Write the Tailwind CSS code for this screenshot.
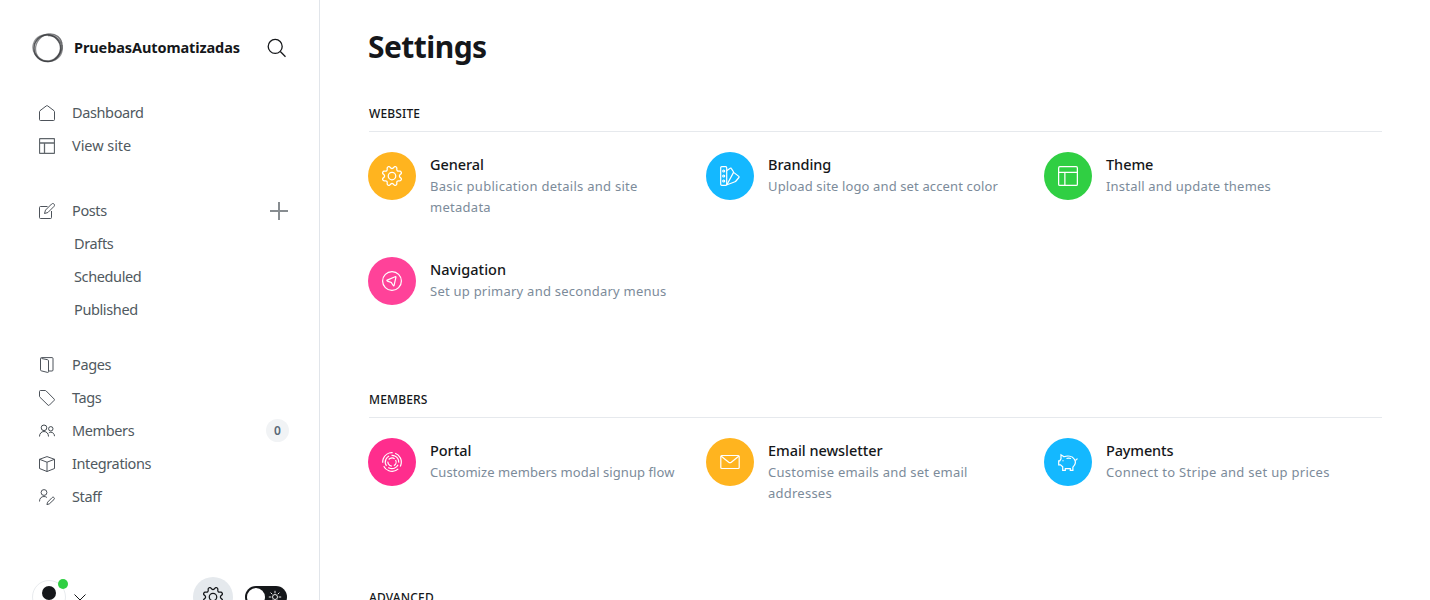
<!DOCTYPE html>
<html lang="en">
<head>
<meta charset="utf-8">
<title>Settings</title>
<script src="https://cdn.jsdelivr.net/npm/@tailwindcss/browser@4"></script>
</head>
<body class="h-[600px] overflow-hidden bg-white font-['Noto_Sans','Open_Sans',sans-serif] text-[#15171a]">
<svg class="hidden">
  <symbol id="gear" viewBox="0 0 24 24"><path d="M10.546 2.438a1.957 1.957 0 0 0 2.908 0L14.4 1.4a1.959 1.959 0 0 1 3.41 1.413l-.071 1.4A1.958 1.958 0 0 0 19.79 6.271l1.4-.071A1.959 1.959 0 0 1 22.6 9.606l-1.042.94a1.96 1.96 0 0 0 0 2.909l1.042.94a1.959 1.959 0 0 1-1.413 3.41l-1.4-.071a1.958 1.958 0 0 0-2.056 2.056l.071 1.4A1.959 1.959 0 0 1 14.4 22.6l-.941-1.041a1.959 1.959 0 0 0-2.908 0L9.606 22.6A1.959 1.959 0 0 1 6.2 21.192l.072-1.4a1.958 1.958 0 0 0-2.056-2.056l-1.4.071A1.958 1.958 0 0 1 1.4 14.4l1.041-.94a1.96 1.96 0 0 0 0-2.909L1.4 9.606A1.958 1.958 0 0 1 2.809 6.2l1.4.071A1.958 1.958 0 0 0 6.267 4.211L6.2 2.81A1.959 1.959 0 0 1 9.606 1.4Z"/><circle cx="12" cy="12" r="4.5"/></symbol>
  <symbol id="layout" viewBox="0 0 24 24"><rect x=".75" y=".75" width="22.5" height="22.5" rx="1.5"/><path d="M.75 7.5h22.5M8.25 7.5v15.75"/></symbol>
</svg>
<div class="flex h-[600px] overflow-hidden">
  <aside class="flex w-80 shrink-0 flex-col border-r border-[#e1e5ea]">
    <header class="mt-8 flex h-8 shrink-0 items-center pr-8 pl-8">
      <svg class="h-8 w-8 shrink-0" viewBox="0 0 32 32" fill="none" stroke="#3a3c3f"><circle cx="15.3" cy="16.3" r="13.3" stroke-width="1.5" opacity=".85"/><ellipse cx="16.8" cy="15.4" rx="14.2" ry="12.6" stroke-width="1.3" opacity=".6" transform="rotate(-50 16.8 15.4)"/><ellipse cx="15.6" cy="16" rx="14.8" ry="13.4" stroke-width="1.2" opacity=".55" transform="rotate(15 15.6 16)"/><path d="M16 3.500c7-1 12 2 13.200 8M29.600 13c.3 6-2 10.500-6.500 14" stroke-width="2.600" opacity=".3"/></svg>
      <span class="ml-2.5 text-[14.5px] font-bold tracking-[-0.1px]">PruebasAutomatizadas</span>
      <svg class="ml-auto h-5 w-5" viewBox="0 0 20 20" fill="none" stroke="#15171a" stroke-width="1.3"><circle cx="8.200" cy="8.400" r="7"/><path d="m13.300 13.500 5.200 5.200"/></svg>
    </header>
    <nav class="mt-8 flex shrink-0 flex-col text-[14.5px] font-normal tracking-[-0.38px] text-[#505960] [&>div]:flex [&>div]:h-[33px] [&>div]:items-center [&>div]:pr-[30px] [&>div]:pl-[39px] [&>div>svg]:mr-[17px] [&>div>svg]:h-4 [&>div>svg]:w-4 [&>div>svg]:shrink-0 [&>div>svg]:fill-none [&>div>svg]:stroke-[#394047]">
      <div><svg viewBox="0 0 16 16" stroke-width=".9"><path d="M.5 6.700v7.800q0 1 1 1h13q1 0 1-1V6.700q0-.6-.5-1L8.700.9q-.7-.5-1.400 0L1 5.700q-.5.400-.5 1Z"/></svg><span>Dashboard</span></div>
      <div><svg class="opacity-80" stroke-width="1.900"><use href="#layout"/></svg><span class="tracking-[-0.05px]">View site</span></div>
      <div class="mt-8"><svg viewBox="0 0 16 16" stroke-width=".9"><path d="M8.500 3.500H1.500q-1 0-1 1v10q0 1 1 1h10q1 0 1-1V8M15 1c-.7-.7-1.700-.7-2.400 0L6.500 7.100l-1 3.400 3.400-1L15 3.400c.7-.7.7-1.700 0-2.400Z"/></svg><span>Posts</span><svg class="!mr-0 ml-auto !h-5 !w-5 opacity-60" viewBox="0 0 20 20" stroke-width="2"><path d="M10 1v18M1 10h18"/></svg></div>
      <div><span class="ml-[35px]">Drafts</span></div>
      <div><span class="ml-[35px]">Scheduled</span></div>
      <div><span class="ml-[35px]">Published</span></div>
      <div class="mt-[22px]"><svg viewBox="0 0 16 16" stroke-width=".9"><path d="M2.500 1.500 8.500 2.700q1 .2 1 1v11q0 .9-1 .7l-6-1.500q-1-.2-1-1V1.500q0-.9 1-.9h10.500q1 0 1 1v11.400q0 1-1 1h-3"/></svg><span>Pages</span></div>
      <div><svg viewBox="0 0 16 16" stroke-width=".9"><path d="M.5 1.500v4.800q0 .5.400.9l8.200 8q.6.500 1.200 0l4.900-4.900q.5-.6 0-1.200L7.100.9Q6.700.5 6.200.5H1.500q-1 0-1 1Z"/></svg><span>Tags</span></div>
      <div><svg viewBox="0 0 16 16" stroke-width=".95"><circle cx="5" cy="4.800" r="2.800"/><circle cx="11.800" cy="5.800" r="2.200"/><path d="M.5 13.500c0-2.800 1.800-5 4.500-5s4.500 2.200 4.500 5M9.800 10c.6-.5 1.200-.8 2-.8 2 0 3.700 1.700 3.700 4"/></svg><span>Members</span><em class="ml-auto flex h-[23px] w-[23px] items-center justify-center rounded-full bg-[#f1f3f5] pt-px text-[12px] font-semibold tracking-normal text-[#5a6977] not-italic">0</em></div>
      <div><svg viewBox="0 0 16 16" stroke-width=".9"><path d="M8 .6 15.500 3.300v9.200L8 15.500.5 12.500V3.300ZM.5 3.300 8 6.200l7.500-2.900M8 6.200v9.300"/></svg><span>Integrations</span></div>
      <div><svg viewBox="0 0 16 16" stroke-width=".9"><circle cx="5" cy="3.500" r="2.900"/><path d="M.5 12.500C.5 9.500 2.200 7.500 5 7.500c1.200 0 2.100.3 2.900 1M15 8.600c-.6-.6-1.300-.6-1.900 0l-4.500 4.600-.7 2.400 2.400-.7L15 10.500c.6-.6.6-1.300 0-1.900Z"/></svg><span>Staff</span></div>
    </nav>
    <footer class="mt-[64px] flex h-10 shrink-0 items-center pl-8">
      <div class="relative h-[34px] w-[34px] rounded-full border border-[#e8ebee]"><span class="absolute top-[5px] left-[9px] h-[14px] w-[14px] rounded-full bg-[#15171a]"></span><span class="absolute -top-[2px] left-[25px] h-[10px] w-[10px] rounded-full bg-[#30cf43]"></span></div>
      <svg class="ml-2 h-[12px] w-[12px]" viewBox="0 0 12 12" fill="none" stroke="#15171a"><path d="m.5 3.500 5.500 5.500 5.500-5.500"/></svg>
      <div class="ml-[107px] flex h-10 w-10 items-center justify-center rounded-full bg-[#e5e9ed]"><svg class="h-5 w-5 fill-none stroke-[#15171a]" stroke-width="1.500"><use href="#gear"/></svg></div>
      <div class="ml-3 flex h-[22px] w-[42px] items-center justify-between rounded-full bg-[#15171a] pr-[5px] pl-[2px]"><span class="h-[18px] w-[18px] rounded-full bg-white"></span><svg class="h-[14px] w-[14px]" viewBox="0 0 14 14" fill="none" stroke="#fff" stroke-width=".9"><circle cx="7" cy="7" r="2.500"/><path d="M7 .8v2.500M7 10.700v2.500M.8 7h2.500M10.700 7h2.500M2.600 2.600l1.700 1.700M9.700 9.700l1.700 1.700M2.600 11.400l1.700-1.700M9.700 4.300l1.700-1.700"/></svg></div>
    </footer>
  </aside>
  <main class="w-[1062px] pl-12 [&_h2]:ml-px [&_h2]:flex [&_h2]:h-[36px] [&_h2]:items-center [&_h2]:border-b [&_h2]:border-[#e6e9ed] [&_h2]:text-[12px] [&_h2]:font-medium [&_h2]:tracking-[0.15px] [&_h3]:text-[14.5px] [&_h3]:leading-[20px] [&_h3]:font-medium [&_h3]:tracking-[-0.05px] [&_p]:mt-[2px] [&_p]:text-[13px] [&_p]:leading-[21px] [&_p]:text-[#7c8b9a] [&_article]:flex [&_article]:h-[105px] [&_article]:gap-[14px] [&_article]:pr-6 [&_article>span]:flex [&_article>span]:h-12 [&_article>span]:w-12 [&_article>span]:shrink-0 [&_article>span]:items-center [&_article>span]:justify-center [&_article>span]:rounded-full [&_article>div]:pt-[2px] [&_article_svg]:h-5 [&_article_svg]:w-5 [&_article_svg]:fill-none [&_article_svg]:stroke-white">
    <h1 class="mt-6 h-12 text-[30px] leading-[46px] font-bold tracking-[-0.55px]">Settings</h1>
    <section class="mt-6">
      <h2>WEBSITE</h2>
      <div class="mt-5 grid grid-cols-3">
        <article><span class="bg-[#ffb41f]"><svg stroke-width="1.500"><use href="#gear"/></svg></span><div><h3>General</h3><p class="tracking-[0.27px]">Basic publication details and site metadata</p></div></article>
        <article><span class="bg-[#14b8ff]"><svg viewBox="0 0 20 20" stroke-width="1.200"><rect x=".7" y=".7" width="6" height="18.600" rx="1"/><circle cx="3.700" cy="5" r="1"/><circle cx="3.700" cy="10" r="1"/><circle cx="3.700" cy="15" r="1"/><path d="m7 4.500 3.200-2.300q.8-.4 1.200.4l1.900 2.900q.4.700 0 1.400L7 18.500M13.300 6.100l5.500 4.300q.6.500.1 1.100L16 15q-.4.500-1 .7L6.500 19"/></svg></span><div><h3>Branding</h3><p class="tracking-[0.13px]">Upload site logo and set accent color</p></div></article>
        <article><span class="bg-[#30cf43]"><svg stroke-width="1.500"><use href="#layout"/></svg></span><div><h3>Theme</h3><p class="tracking-[0.2px]">Install and update themes</p></div></article>
        <article><span class="bg-[#ff4299]"><svg viewBox="0 0 20 20" stroke-width="1.200"><circle cx="10" cy="10" r="9.400"/><path d="m5.200 9.100 7.900-3.400q1-.4.800.6l-1.800 8q-.3 1-.9.200l-1.900-3-3.900-1.400q-.9-.5-.2-1Z"/></svg></span><div><h3 class="!tracking-[0.03px]">Navigation</h3><p class="tracking-[0.24px]">Set up primary and secondary menus</p></div></article>
      </div>
    </section>
    <section class="mt-[20px]">
      <h2>MEMBERS</h2>
      <div class="mt-5 grid grid-cols-3">
        <article><span class="bg-[#ff2d8d]"><svg viewBox="0 0 20 20" stroke-width="1.200"><circle cx="10" cy="10" r="9.300" stroke-dasharray="16 3 17 3.500 16 3" transform="rotate(-70 10 10)"/><circle cx="10" cy="10" r="6.700" stroke-dasharray="11.500 2.500" transform="rotate(25 10 10)"/><circle cx="10" cy="10" r="4.100" stroke-dasharray="6.500 2.100" transform="rotate(-30 10 10)"/></svg></span><div><h3>Portal</h3><p class="tracking-[0.07px]">Customize members modal signup flow</p></div></article>
        <article><span class="bg-[#ffb41f]"><svg viewBox="0 0 20 20" stroke-width="1.200"><rect x=".8" y="3.500" width="18.400" height="13" rx="1"/><path d="m1 4 7.700 6.200q1.300 1 2.600 0L19 4"/></svg></span><div><h3>Email newsletter</h3><p class="tracking-[0.24px]">Customise emails and set email addresses</p></div></article>
        <article><span class="bg-[#14b8ff]"><svg viewBox="0 0 20 20" stroke-width="1.200"><path d="M6 4.800 3 2.800v4L1.800 8.800H.7v4h1.800l2.200 2v3.600h2.600v-1.800h5v1.800h2.600v-3.300c2.500-2.300 3-5.600 1.400-7.900C14.300 4 9.800 3.500 6 4.800ZM16.700 8.200c1.200.2 2.200-.5 2.700-1.600M8.500 6.500c1.600-.5 3-.5 4.500 0M5 8.300v1"/></svg></span><div><h3 class="!tracking-[-0.15px]">Payments</h3><p class="tracking-[0.3px]">Connect to Stripe and set up prices</p></div></article>
      </div>
    </section>
    <section class="mt-[37px]">
      <h2>ADVANCED</h2>
    </section>
  </main>
</div>
</body>
</html>
